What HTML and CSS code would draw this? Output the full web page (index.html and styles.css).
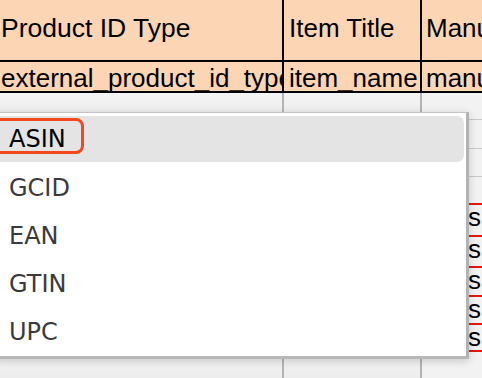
FILE: index.html
```html
<!DOCTYPE html>
<html lang="en">
<head>
    <meta charset="UTF-8">
    <meta name="viewport" content="width=device-width, initial-scale=1.0">
    <title>Product ID Type</title>
    <link rel="stylesheet" href="styles.css">
</head>
<body>
    <div class="sheet">
        <div class="row head">
            <div class="cell c1">Product ID Type</div>
            <div class="cell c2">Item Title</div>
            <div class="cell c3">Manufacturer</div>
        </div>
        <div class="row keys">
            <div class="cell c1">external_product_id_type</div>
            <div class="cell c2">item_name</div>
            <div class="cell c3">manufacturer</div>
        </div>
        <div class="row body r27"><div class="cell c1"></div><div class="cell c2"></div><div class="cell c3"></div></div>
        <div class="row body r29"><div class="cell c1"></div><div class="cell c2"></div><div class="cell c3"></div></div>
        <div class="row body r28"><div class="cell c1"></div><div class="cell c2"></div><div class="cell c3"></div></div>
        <div class="row body r28"><div class="cell c1"></div><div class="cell c2"></div><div class="cell c3 flag"></div></div>
        <div class="row body r32"><div class="cell c1"></div><div class="cell c2"></div><div class="cell c3 flag">Teas</div></div>
        <div class="row body r31"><div class="cell c1"></div><div class="cell c2"></div><div class="cell c3 flag">Teas</div></div>
        <div class="row body r29"><div class="cell c1"></div><div class="cell c2"></div><div class="cell c3 flag">Teas</div></div>
        <div class="row body r28"><div class="cell c1"></div><div class="cell c2"></div><div class="cell c3 flag">Teas</div></div>
        <div class="row body r27"><div class="cell c1"></div><div class="cell c2"></div><div class="cell c3 flag">Teas</div></div>
        <div class="row body r30"><div class="cell c1"></div><div class="cell c2"></div><div class="cell c3"></div></div>
    </div>

    <ul class="dropdown">
        <li class="option active">ASIN<span class="mark"></span></li>
        <li class="option">GCID</li>
        <li class="option">EAN</li>
        <li class="option">GTIN</li>
        <li class="option">UPC</li>
    </ul>
</body>
</html>
```

FILE: styles.css
```css
body {
    margin: 0;
    width: 482px;
    height: 378px;
    overflow: hidden;
    position: relative;
    font-family: "Liberation Sans", Arial, sans-serif;
    background-color: #ececec;
}
.sheet {
    display: flex;
    flex-direction: column;
}
.row {
    display: grid;
    grid-template-columns: 284px 138px 1fr;
}
.cell {
    box-sizing: border-box;
    overflow: hidden;
    white-space: nowrap;
    font-size: 26px;
    color: #000;
}
.head .cell,
.keys .cell {
    background-color: #fcd5b4;
    border-right: 2px solid #000;
    border-bottom: 2px solid #000;
}
.head .cell {
    height: 62px;
    line-height: 56px;
}
.head .c1 {
    font-size: 26.5px;
}
.keys .cell {
    height: 31px;
    line-height: 32px;
}
.c1 {
    padding-left: 1px;
}
.c2 {
    padding-left: 5px;
}
.c3 {
    padding-left: 4px;
    border-right: none !important;
}
.body .cell {
    background: linear-gradient(#f4f4f4, #ececec);
    border-right: 2px solid #b4b4b4;
    border-bottom: 1px solid #c8c8c8;
    line-height: 24px;
}
.body .c3 {
    background: #f2f2f2;
}
.body .flag {
    border-bottom: 2px solid #e8140e;
}
.r27 .cell { height: 27px; }
.r28 .cell { height: 28px; }
.r29 .cell { height: 29px; }
.r30 .cell { height: 30px; }
.r31 .cell { height: 31px; }
.r32 .cell { height: 32px; }

.dropdown {
    position: absolute;
    left: -6px;
    top: 112px;
    width: 475px;
    box-sizing: border-box;
    margin: 0;
    padding: 3px 0 0;
    list-style: none;
    background-color: #fff;
    border: 1px solid #c4c4c4;
    border-right: 3px solid #b2b2b2;
    border-bottom: 3px solid #b8b8b8;
    box-shadow: 0 2px 8px rgba(0, 0, 0, 0.18);
    font-family: "DejaVu Sans", "Open Sans", sans-serif;
    font-size: 24px;
}
.option {
    position: relative;
    height: 48px;
    line-height: 48px;
    padding-left: 14px;
    color: #3a3a3a;
}
.option.active {
    color: #000;
    background-color: #e4e4e4;
    margin-right: 2px;
    border-radius: 0 7px 7px 0;
    height: 46px;
    margin-bottom: 2px;
    line-height: 46px;
}
.mark {
    position: absolute;
    left: -4px;
    top: 2px;
    width: 93px;
    height: 36px;
    box-sizing: border-box;
    border: 3px solid #f24a1e;
    border-radius: 8px;
}
```
